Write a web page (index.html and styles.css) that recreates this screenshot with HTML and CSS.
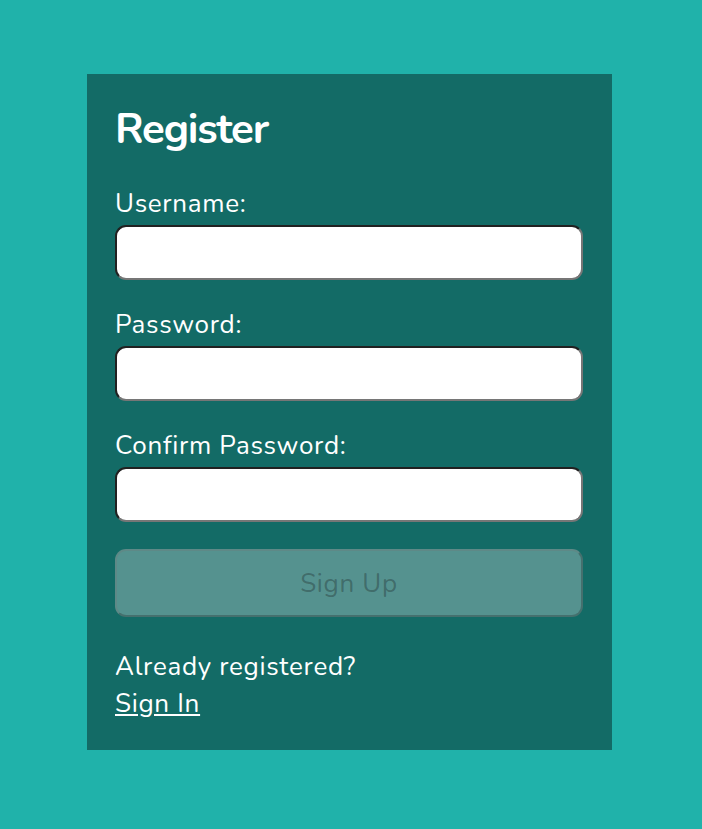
FILE: index.html
```html
<!DOCTYPE html>
<html lang="en">
<head>
<meta charset="utf-8">
<title>Register</title>
<link rel="stylesheet" href="styles.css">
</head>
<body>
<section class="card">
  <h1 class="title">Register</h1>
  <form class="form">
    <label class="label" for="username">Username:</label>
    <input class="field" type="text" id="username">
    <label class="label" for="password">Password:</label>
    <input class="field" type="password" id="password">
    <label class="label" for="confirm">Confirm Password:</label>
    <input class="field" type="password" id="confirm">
    <button class="submit" type="button" disabled>Sign Up</button>
  </form>
  <p class="footer">Already registered?<br><a class="link" href="#">Sign In</a></p>
</section>
</body>
</html>
```

FILE: styles.css
```css
html, body {
  margin: 0;
  padding: 0;
}
body {
  background: #20b2aa;
  min-height: 829px;
  padding: 74px 0 0 87px;
  box-sizing: border-box;
  font-family: "Nunito", Lato, "Noto Sans", sans-serif;
  color: #fff;
}
.card {
  width: 525px;
  height: 676px;
  box-sizing: border-box;
  padding: 31px 29px 28px 28px;
  background: rgba(0, 0, 0, 0.4);
  display: flex;
  flex-direction: column;
}
.card > * {
  flex-shrink: 0;
}
.title {
  margin: 0 0 34px 0;
  font-size: 42px;
  line-height: 50px;
  font-weight: 700;
  letter-spacing: -1.2px;
}
.form {
  display: flex;
  flex-direction: column;
  margin: 0;
}
.form > * {
  flex-shrink: 0;
}
.label {
  font-size: 26px;
  line-height: 30px;
  letter-spacing: 0.7px;
  margin-bottom: 6px;
}
.field {
  box-sizing: border-box;
  width: 468px;
  height: 55px;
  margin: 0 0 30px 0;
  padding: 4px 6px;
  border: 2px inset #767676;
  border-radius: 11px;
  background: #fff;
  font-family: inherit;
  font-size: 25px;
}
.form .field:last-of-type {
  margin-bottom: 27px;
}
.submit {
  box-sizing: border-box;
  width: 468px;
  height: 68px;
  margin: 0;
  padding: 0;
  border: 2px outset rgba(118, 118, 118, 0.3);
  border-radius: 11px;
  background: rgba(239, 239, 239, 0.3);
  color: rgba(16, 16, 16, 0.3);
  font-family: inherit;
  font-size: 26px;
  letter-spacing: 0.7px;
}
.footer {
  margin: 31px 0 0 0;
  font-size: 26px;
  line-height: 37px;
  letter-spacing: 0.7px;
}
.link, .link:visited {
  color: #fff;
  text-decoration: underline;
}
```
